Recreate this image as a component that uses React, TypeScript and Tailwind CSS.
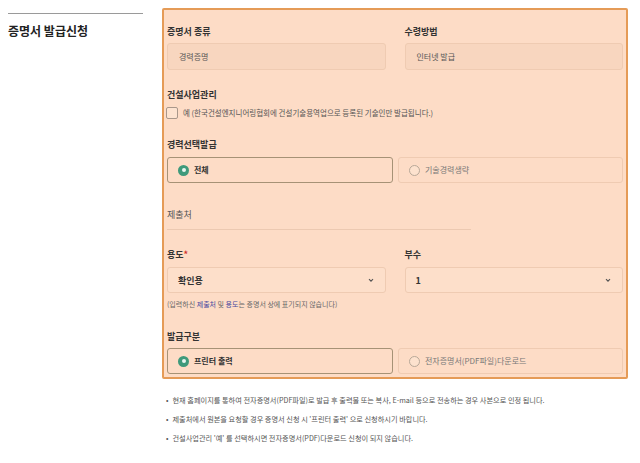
import React from 'react';

const font = { fontFamily: '"Noto Sans CJK KR", "Noto Sans", sans-serif' };

function Label({ children }: { children: React.ReactNode }) {
  return <div className="h-[10px] text-[9px] font-semibold leading-[10px] text-[#333]">{children}</div>;
}

function Radio({ checked, label, active }: { checked?: boolean; label: string; active?: boolean }) {
  return (
    <div
      className={`flex h-[26px] items-center gap-[5px] rounded-[3px] border pl-[10px] text-[8px] leading-none ${
        active ? 'border-[#a69276] text-[#333] font-semibold' : 'border-[#efcbb2] text-[#777]'
      }`}
    >
      {checked ? (
        <span className="flex h-[11px] w-[11px] items-center justify-center rounded-full bg-[#3f9a7b]">
          <span className="h-[4px] w-[4px] rounded-full bg-[#e8f5ef]" />
        </span>
      ) : (
        <span className="h-[11px] w-[11px] rounded-full border border-[#b8a898] bg-[#fde2ce]" />
      )}
      <span>{label}</span>
    </div>
  );
}

function Select({ value }: { value: string }) {
  return (
    <div className="mt-[7px] flex h-[26px] items-center justify-between rounded-[3px] border border-[#efcbb2] bg-[#fddfca] px-[10px] text-[9px] font-semibold leading-none text-[#333]">
      <span>{value}</span>
      <svg width="8" height="8" viewBox="0 0 10 10" fill="none" stroke="#555" strokeWidth="1.4">
        <path d="M2.5 4l2.5 2.5L7.5 4" />
      </svg>
    </div>
  );
}

function ReadOnly({ value }: { value: string }) {
  return (
    <div className="mt-[6px] flex h-[27px] items-center rounded-[3px] border border-[#efcbb2] bg-[#f8d6bf] pl-[11px] text-[8px] leading-none text-[#555]">
      {value}
    </div>
  );
}

export default function App() {
  return (
    <div className="flex h-[463px] w-[640px] bg-white" style={font}>
      {/* left title */}
      <div className="w-[162px] shrink-0 pl-[8px] pt-[13px]">
        <div className="w-[135px] border-t border-[#9a9a9a]" />
        <h2 className="mt-[10px] text-[12px] font-bold leading-[14px] text-[#222]">증명서 발급신청</h2>
      </div>

      <div className="w-[466px]">
        {/* panel */}
        <div className="mt-[8px] h-[371px] rounded-[2px] border-2 border-[#e59b57] bg-[#fddcc6] px-[3px] pt-[17px]">
          <div className="grid grid-cols-2 gap-x-[19px]">
            <div>
              <Label>증명서 종류</Label>
              <ReadOnly value="경력증명" />
            </div>
            <div>
              <Label>수령방법</Label>
              <ReadOnly value="인터넷 발급" />
            </div>
          </div>

          <div className="mt-[20px]">
            <Label>건설사업관리</Label>
            <div className="-ml-[1px] mt-[7px] flex h-[12px] items-center gap-[5px] text-[7.5px] leading-none text-[#555]">
              <span className="h-[12px] w-[12px] rounded-[2px] border border-[#a9978a] bg-[#fde3d0]" />
              <span>예 (한국건설엔지니어링협회에 건설기술용역업으로 등록된 기술인만 발급됩니다.)</span>
            </div>
          </div>

          <div className="mt-[21px]">
            <Label>경력선택발급</Label>
            <div className="mt-[7px] flex gap-[5px]">
              <div className="w-[226px]">
                <Radio checked active label="전체" />
              </div>
              <div className="flex-1">
                <Radio label="기술경력생략" />
              </div>
            </div>
          </div>

          <div className="mt-[27px] w-[304px] border-b border-[#ecc9b1] pb-[9px]">
            <div className="h-[10px] text-[9px] leading-[10px] text-[#555]">제출처</div>
          </div>

          <div className="mt-[20px] grid grid-cols-2 gap-x-[19px]">
            <div>
              <Label>
                용도<span className="text-[#d0302a]">*</span>
              </Label>
              <Select value="확인용" />
            </div>
            <div>
              <Label>부수</Label>
              <Select value="1" />
            </div>
          </div>

          <p className="mt-[7px] h-[8px] text-[7px] leading-[8px] text-[#666]">
            (입력하신 <span className="text-[#4a4aa0]">제출처</span> 및 <span className="text-[#4a4aa0]">용도</span>는 증명서 상에 표기되지 않습니다)
          </p>

          <div className="mt-[24px]">
            <Label>발급구분</Label>
            <div className="mt-[6px] flex gap-[5px]">
              <div className="w-[226px]">
                <Radio checked active label="프린터 출력" />
              </div>
              <div className="flex-1">
                <Radio label="전자증명서(PDF파일)다운로드" />
              </div>
            </div>
          </div>
        </div>

        {/* notes */}
        <ul className="mt-[17px] space-y-[11px] pl-[4px] text-[7.2px] leading-[8px] text-[#555]">
          <li className="flex gap-[4px]">
            <span>•</span>
            <span>현재 홈페이지를 통하여 전자증명서(PDF파일)로 발급 후 출력물 또는 복사, E-mail 등으로 전송하는 경우 사본으로 인정 됩니다.</span>
          </li>
          <li className="flex gap-[4px]">
            <span>•</span>
            <span>제출처에서 원본을 요청할 경우 증명서 신청 시 '프린터 출력' 으로 신청하시기 바랍니다.</span>
          </li>
          <li className="flex gap-[4px]">
            <span>•</span>
            <span>건설사업관리 '예' 를 선택하시면 전자증명서(PDF)다운로드 신청이 되지 않습니다.</span>
          </li>
        </ul>
      </div>
    </div>
  );
}
